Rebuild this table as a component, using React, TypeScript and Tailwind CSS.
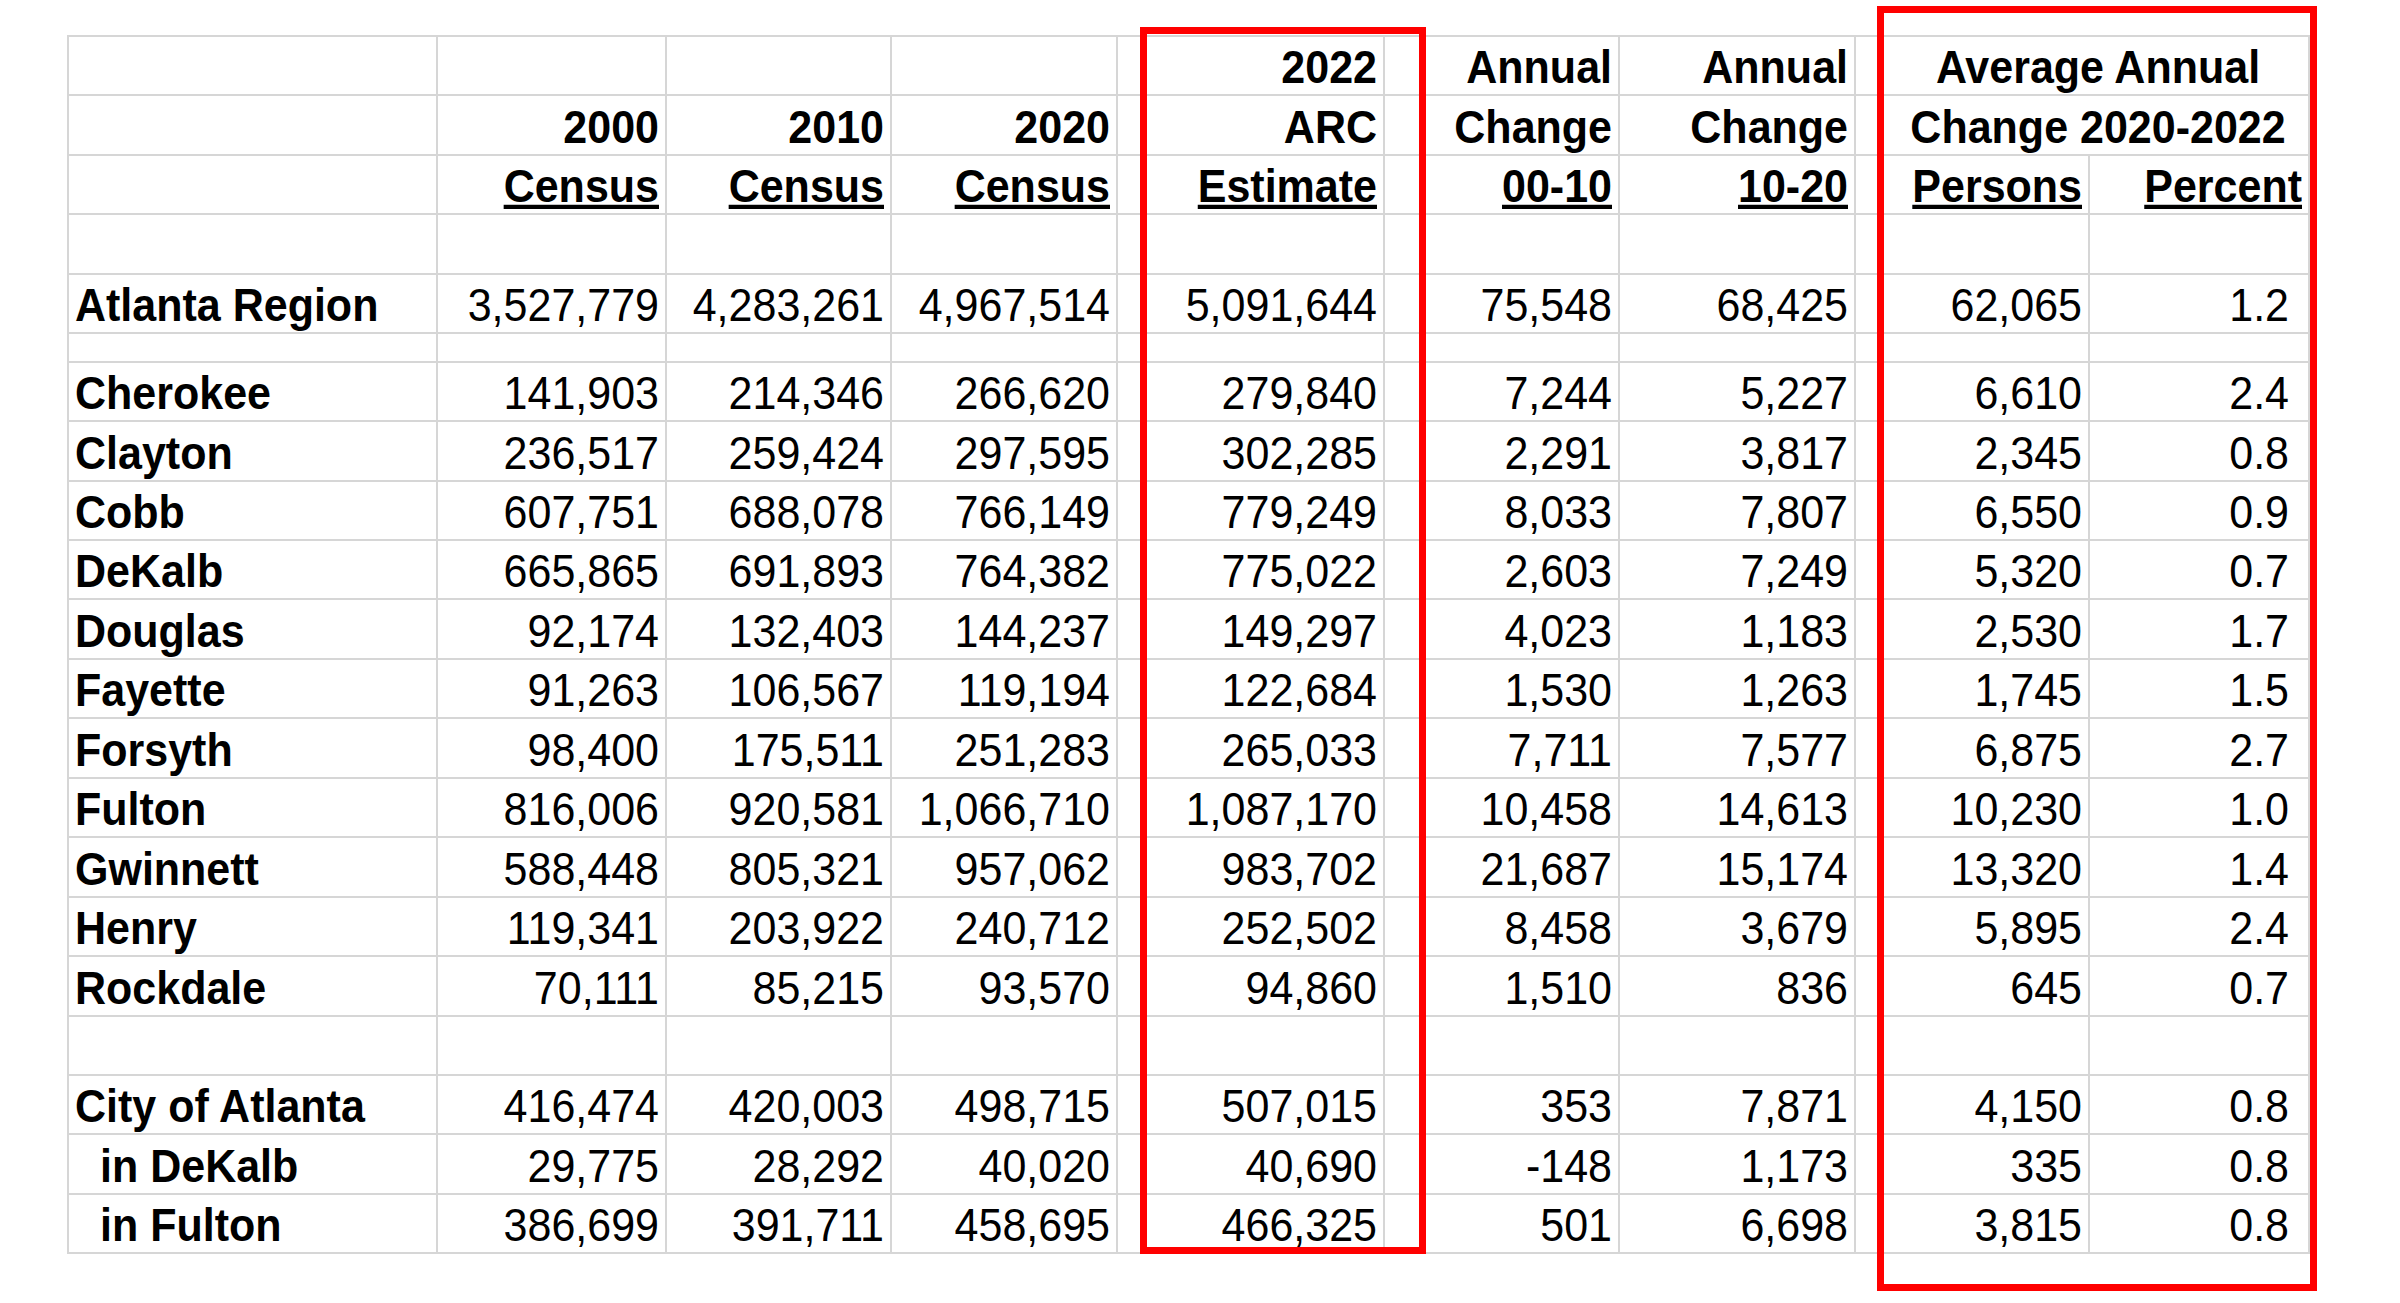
import type { ReactNode } from 'react';

type DataRow = { label: string; indent?: boolean; values: string[] };

const REGION: DataRow = {
  label: 'Atlanta Region',
  values: ['3,527,779', '4,283,261', '4,967,514', '5,091,644', '75,548', '68,425', '62,065', '1.2'],
};

const COUNTIES: DataRow[] = [
  { label: 'Cherokee', values: ['141,903', '214,346', '266,620', '279,840', '7,244', '5,227', '6,610', '2.4'] },
  { label: 'Clayton', values: ['236,517', '259,424', '297,595', '302,285', '2,291', '3,817', '2,345', '0.8'] },
  { label: 'Cobb', values: ['607,751', '688,078', '766,149', '779,249', '8,033', '7,807', '6,550', '0.9'] },
  { label: 'DeKalb', values: ['665,865', '691,893', '764,382', '775,022', '2,603', '7,249', '5,320', '0.7'] },
  { label: 'Douglas', values: ['92,174', '132,403', '144,237', '149,297', '4,023', '1,183', '2,530', '1.7'] },
  { label: 'Fayette', values: ['91,263', '106,567', '119,194', '122,684', '1,530', '1,263', '1,745', '1.5'] },
  { label: 'Forsyth', values: ['98,400', '175,511', '251,283', '265,033', '7,711', '7,577', '6,875', '2.7'] },
  { label: 'Fulton', values: ['816,006', '920,581', '1,066,710', '1,087,170', '10,458', '14,613', '10,230', '1.0'] },
  { label: 'Gwinnett', values: ['588,448', '805,321', '957,062', '983,702', '21,687', '15,174', '13,320', '1.4'] },
  { label: 'Henry', values: ['119,341', '203,922', '240,712', '252,502', '8,458', '3,679', '5,895', '2.4'] },
  { label: 'Rockdale', values: ['70,111', '85,215', '93,570', '94,860', '1,510', '836', '645', '0.7'] },
];

const CITY: DataRow[] = [
  { label: 'City of Atlanta', values: ['416,474', '420,003', '498,715', '507,015', '353', '7,871', '4,150', '0.8'] },
  { label: 'in DeKalb', indent: true, values: ['29,775', '28,292', '40,020', '40,690', '-148', '1,173', '335', '0.8'] },
  { label: 'in Fulton', indent: true, values: ['386,699', '391,711', '458,695', '466,325', '501', '6,698', '3,815', '0.8'] },
];

// one spreadsheet cell: bottom-aligned text, grey grid lines right + bottom
function Cell({
  children,
  className = '',
  short = false,
}: {
  children?: ReactNode;
  className?: string;
  short?: boolean;
}) {
  return (
    <div
      className={`flex items-end border-r-2 border-b-2 border-[#d6d6d6] pb-[4px] ${
        short ? 'h-[28.5px]' : 'h-[59.45px]'
      } ${className}`}
    >
      {children}
    </div>
  );
}

function Txt({ children, className = '' }: { children: ReactNode; className?: string }) {
  return (
    <span className={`inline-block origin-bottom scale-y-[1.06] whitespace-pre leading-none ${className}`}>
      {children}
    </span>
  );
}

function BlankRow({ short = false }: { short?: boolean }) {
  return (
    <>
      {Array.from({ length: 9 }).map((_, i) => (
        <Cell key={i} short={short} />
      ))}
    </>
  );
}

function Data({ row }: { row: DataRow }) {
  return (
    <>
      <Cell className={row.indent ? 'pl-[31px]' : 'pl-[6px]'}>
        <Txt className="font-bold">{row.label}</Txt>
      </Cell>
      {row.values.map((v, i) => (
        <Cell key={i} className={`justify-end ${i === 7 ? 'pr-[19px]' : 'pr-[6px]'}`}>
          <Txt>{v}</Txt>
        </Cell>
      ))}
    </>
  );
}

function Head({ text, u = false }: { text?: string; u?: boolean }) {
  return (
    <Cell className="justify-end pr-[6px]">
      {text && (
        <Txt className={`font-bold ${u ? 'underline decoration-[3.5px] underline-offset-[3px]' : ''}`}>
          {text}
        </Txt>
      )}
    </Cell>
  );
}

export default function App() {
  return (
    <div
      className="min-h-screen bg-white pl-[67px] pt-[35px] text-[43px] text-black"
      style={{ fontFamily: '"Liberation Sans", Arial, sans-serif' }}
    >
      <div className="relative w-fit">
        <div className="grid w-fit grid-cols-[369px_229px_225px_226px_267px_235px_236px_234px_220px] border-l-2 border-t-2 border-[#d6d6d6]">
          {/* header line 1 */}
          <Head />
          <Head />
          <Head />
          <Head />
          <Head text="2022" />
          <Head text="Annual" />
          <Head text="Annual" />
          <Cell className="col-span-2 justify-center pl-[32px]">
            <Txt className="font-bold">Average Annual</Txt>
          </Cell>

          {/* header line 2 */}
          <Head />
          <Head text="2000" />
          <Head text="2010" />
          <Head text="2020" />
          <Head text="ARC" />
          <Head text="Change" />
          <Head text="Change" />
          <Cell className="col-span-2 justify-center pl-[32px]">
            <Txt className="font-bold">Change 2020-2022</Txt>
          </Cell>

          {/* header line 3 */}
          <Head />
          <Head text="Census" u />
          <Head text="Census" u />
          <Head text="Census" u />
          <Head text="Estimate" u />
          <Head text="00-10" u />
          <Head text="10-20" u />
          <Head text="Persons" u />
          <Head text="Percent" u />

          <BlankRow />
          <Data row={REGION} />
          <BlankRow short />
          {COUNTIES.map((r) => (
            <Data key={r.label} row={r} />
          ))}
          <BlankRow />
          {CITY.map((r) => (
            <Data key={r.label} row={r} />
          ))}
        </div>

        {/* red highlight boxes */}
        <div className="pointer-events-none absolute left-[1073px] top-[-8px] h-[1227px] w-[286px] border-[7px] border-[#ff0000]" />
        <div className="pointer-events-none absolute left-[1810px] top-[-29px] h-[1285px] w-[440px] border-[7px] border-[#ff0000]" />
      </div>
    </div>
  );
}
